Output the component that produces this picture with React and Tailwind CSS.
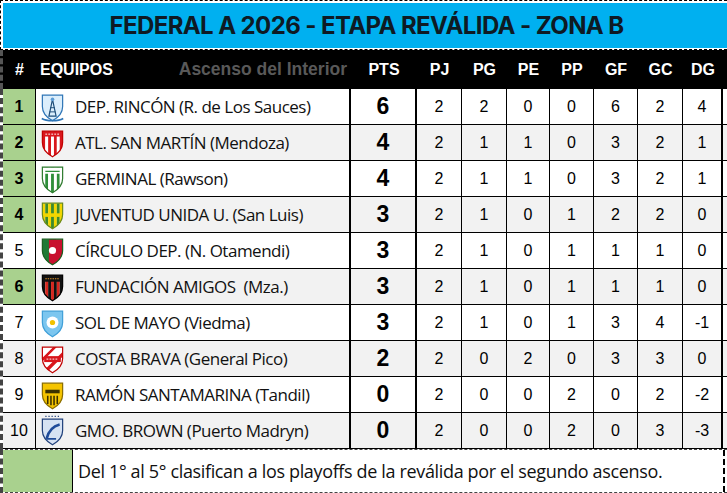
import React from 'react'

const SHIELD = 'M1.5 1.5 H18.5 V11 C18.5 17 14.5 20.5 10 23 C5.5 20.5 1.5 17 1.5 11 Z'

function Stripes({ a, b, n = 7 }) {
    const w = 17 / n
    return (
        <>
            {Array(n).fill().map((_, i) => (
                <rect key={i} x={1.5 + i * w} y="1.5" width={w} height="22" fill={i % 2 === 0 ? a : b} />
            ))}
        </>
    )
}

function Crest({ id }) {
    const clip = `clip-${id}`
    let inner = null
    let outline = '#333'
    if (id === 1) {
        outline = '#2e75b6'
        inner = (
            <>
                <rect x="0" y="0" width="20" height="24" fill="#dbeefc" />
                <path d="M10 5 L13 19 H7 Z" fill="none" stroke="#1f4e79" strokeWidth="1" />
                <path d="M8 12 H12 M7.5 15.5 H12.5" stroke="#1f4e79" strokeWidth="0.8" />
                <circle cx="10" cy="5" r="1.5" fill="#5b9bd5" />
            </>
        )
    } else if (id === 2) {
        outline = '#c00000'
        inner = (
            <>
                <Stripes a="#d9161c" b="#ffffff" n={7} />
                <rect x="0" y="0" width="20" height="6" fill="#d9161c" />
                <path d="M4 4 H16" stroke="#fff" strokeWidth="0.8" strokeDasharray="1.5 1" />
            </>
        )
    } else if (id === 3) {
        outline = '#2d7a2d'
        inner = (
            <>
                <Stripes a="#ffffff" b="#2f8f3a" n={7} />
                <rect x="0" y="0" width="20" height="7" fill="#ffffff" />
                <path d="M4 5 H16" stroke="#2f8f3a" strokeWidth="1.2" />
            </>
        )
    } else if (id === 4) {
        outline = '#6a8a1a'
        inner = (
            <>
                <Stripes a="#f2d600" b="#3d8a2a" n={7} />
                <rect x="0" y="10" width="20" height="3" fill="#f2d600" />
            </>
        )
    } else if (id === 5) {
        outline = '#1b5e20'
        inner = (
            <>
                <rect x="0" y="0" width="10" height="24" fill="#1f7a35" />
                <rect x="10" y="0" width="10" height="24" fill="#c8102e" />
                <rect x="7" y="0" width="6" height="24" fill="#c8102e" />
                <circle cx="10" cy="11" r="3" fill="#ffffff" />
            </>
        )
    } else if (id === 6) {
        outline = '#000'
        inner = (
            <>
                <Stripes a="#111111" b="#d7261e" n={7} />
                <rect x="0" y="0" width="20" height="7" fill="#111" />
                <path d="M4 4.5 H16" stroke="#f0a030" strokeWidth="0.8" strokeDasharray="1.2 0.8" />
            </>
        )
    } else if (id === 7) {
        outline = '#3f9fd8'
        inner = (
            <>
                <rect x="0" y="0" width="20" height="24" fill="#7cc6ef" />
                <circle cx="10" cy="11" r="5" fill="#ffffff" />
                <circle cx="10" cy="11" r="2.2" fill="#f2c200" />
            </>
        )
    } else if (id === 8) {
        outline = '#c00000'
        inner = (
            <>
                <rect x="0" y="0" width="20" height="24" fill="#ffffff" />
                <path d="M-2 14 L14 -2 L17 -2 L-2 17 Z M2 22 L22 2 L22 6 L5 23 Z" fill="#d9161c" />
                <rect x="3" y="9" width="14" height="5" fill="#d9161c" />
                <path d="M5 11.5 H15" stroke="#fff" strokeWidth="0.8" strokeDasharray="1.5 1" />
            </>
        )
    } else if (id === 9) {
        outline = '#8a6d00'
        inner = (
            <>
                <rect x="0" y="0" width="20" height="24" fill="#f5c400" />
                <rect x="4" y="7" width="12" height="3" fill="#3a3000" />
                <path d="M6 12 V19 M8.7 12 V20 M11.3 12 V20 M14 12 V19" stroke="#3a3000" strokeWidth="1.3" />
            </>
        )
    } else if (id === 10) {
        outline = '#1f3f7a'
        inner = (
            <>
                <rect x="0" y="0" width="20" height="24" fill="#d6e2f3" />
                <path d="M5 18 C7 10 12 7 16 6" stroke="#1f4b99" strokeWidth="2.2" fill="none" />
                <path d="M5 18 L13 18" stroke="#1f4b99" strokeWidth="1.5" />
            </>
        )
    }
    return (
        <svg width="25" height="31" viewBox="0 -2 20 26">
            <defs>
                <clipPath id={clip}>
                    <path d={SHIELD} />
                </clipPath>
            </defs>
            {id === 10 && (
                <path d="M4 -0.8 H16" stroke="#1f3f7a" strokeWidth="1" strokeDasharray="1 1.6" />
            )}
            <g clipPath={`url(#${clip})`}>{inner}</g>
            <path d={SHIELD} fill="none" stroke={outline} strokeWidth="1" />
            {id === 1 && (
                <path d="M1 21 C5 23.5 15 23.5 19 21" stroke="#2e75b6" strokeWidth="1.4" fill="none" />
            )}
        </svg>
    )
}

const teams = [
    { pos: 1, name: 'DEP. RINCÓN (R. de Los Sauces)', pts: 6, pj: 2, pg: 2, pe: 0, pp: 0, gf: 6, gc: 2, dg: 4, q: true },
    { pos: 2, name: 'ATL. SAN MARTÍN (Mendoza)', pts: 4, pj: 2, pg: 1, pe: 1, pp: 0, gf: 3, gc: 2, dg: 1, q: true },
    { pos: 3, name: 'GERMINAL (Rawson)', pts: 4, pj: 2, pg: 1, pe: 1, pp: 0, gf: 3, gc: 2, dg: 1, q: true },
    { pos: 4, name: 'JUVENTUD UNIDA U. (San Luis)', pts: 3, pj: 2, pg: 1, pe: 0, pp: 1, gf: 2, gc: 2, dg: 0, q: true },
    { pos: 5, name: 'CÍRCULO DEP. (N. Otamendi)', pts: 3, pj: 2, pg: 1, pe: 0, pp: 1, gf: 1, gc: 1, dg: 0, q: false },
    { pos: 6, name: 'FUNDACIÓN AMIGOS  (Mza.)', pts: 3, pj: 2, pg: 1, pe: 0, pp: 1, gf: 1, gc: 1, dg: 0, q: true },
    { pos: 7, name: 'SOL DE MAYO (Viedma)', pts: 3, pj: 2, pg: 1, pe: 0, pp: 1, gf: 3, gc: 4, dg: -1, q: false },
    { pos: 8, name: 'COSTA BRAVA (General Pico)', pts: 2, pj: 2, pg: 0, pe: 2, pp: 0, gf: 3, gc: 3, dg: 0, q: false },
    { pos: 9, name: 'RAMÓN SANTAMARINA (Tandil)', pts: 0, pj: 2, pg: 0, pe: 0, pp: 2, gf: 0, gc: 2, dg: -2, q: false },
    { pos: 10, name: 'GMO. BROWN (Puerto Madryn)', pts: 0, pj: 2, pg: 0, pe: 0, pp: 2, gf: 0, gc: 3, dg: -3, q: false },
]

const numCols = [
    { key: 'pj', w: 'w-[45px]' },
    { key: 'pg', w: 'w-[45px]' },
    { key: 'pe', w: 'w-[43px]' },
    { key: 'pp', w: 'w-[44px]' },
    { key: 'gf', w: 'w-[44px]' },
    { key: 'gc', w: 'w-[45px]' },
    { key: 'dg', w: 'w-[40px]' },
]

function App() {
    return (
        <div className="w-[727px] h-[493px] bg-white overflow-hidden font-['Liberation_Sans',Arial,sans-serif] text-black">
            <div className="h-[50px] border-y border-l border-dashed border-black pl-[2px] pt-[2px] pb-[1px] bg-white">
                <div className="h-full bg-[#00b0f0] flex items-center justify-center">
                    <span className="font-['Inter',sans-serif] font-bold text-[24px] tracking-[-0.6px] text-[#0e1a24] pl-[3px]">
                        FEDERAL A 2026 - ETAPA REVÁLIDA - ZONA B
                    </span>
                </div>
            </div>

            <div className="h-[39px] bg-black flex items-center text-white font-bold text-[16px] border-l-[3px] border-dashed border-[#555]">
                <div className="w-[33px] text-center">#</div>
                <div className="w-[315px] flex items-center justify-between pl-[4px] pr-[4px]">
                    <span>EQUIPOS</span>
                    <span className="text-[#595959] text-[17.5px]">Ascenso del Interior</span>
                </div>
                <div className="w-[66px] text-center">PTS</div>
                <div className="w-[45px] text-center">PJ</div>
                <div className="w-[45px] text-center">PG</div>
                <div className="w-[43px] text-center">PE</div>
                <div className="w-[44px] text-center">PP</div>
                <div className="w-[44px] text-center">GF</div>
                <div className="w-[45px] text-center">GC</div>
                <div className="w-[40px] text-center">DG</div>
            </div>

            <div className="border-l-[3px] border-dashed border-[#444]">
                {teams.map(t => (
                    <div
                        key={t.pos}
                        className={`h-[36px] flex border-b border-black ${t.pos % 2 === 0 ? 'bg-[#f2f2f2]' : 'bg-white'}`}
                    >
                        <div className={`w-[33px] flex items-center justify-center border-r border-black text-[16px] ${t.q ? 'bg-[#a9d18e] font-bold' : ''}`}>
                            {t.pos}
                        </div>
                        <div className="w-[315px] flex items-center gap-[10px] pl-[4px] border-r-2 border-black">
                            <Crest id={t.pos} />
                            <span className="font-['Open_Sans',sans-serif] text-[17px] tracking-[-0.5px] whitespace-pre text-[#111]">
                                {t.name}
                            </span>
                        </div>
                        <div className="w-[66px] flex items-center justify-center border-r-2 border-black font-bold text-[23px]">
                            {t.pts}
                        </div>
                        {numCols.map((c, i) => (
                            <div
                                key={c.key}
                                className={`${c.w} flex items-center justify-center text-[16px] ${i === numCols.length - 1 ? 'border-r-2' : 'border-r'} border-black`}
                            >
                                {t[c.key]}
                            </div>
                        ))}
                    </div>
                ))}
            </div>

            <div className="h-[44px] flex border-l-[3px] border-y border-dashed border-[#444]">
                <div className="w-[70px] bg-[#a9d18e] border-r border-black"></div>
                <div className="flex-1 flex items-center pl-[5px] border-r-2 border-dashed border-black mr-[2px]">
                    <span className="font-['Open_Sans',sans-serif] text-[18px] tracking-[-0.35px] text-[#111]">
                        Del 1° al 5° clasifican a los playoffs de la reválida por el segundo ascenso.
                    </span>
                </div>
            </div>
        </div>
    )
}

export default App
